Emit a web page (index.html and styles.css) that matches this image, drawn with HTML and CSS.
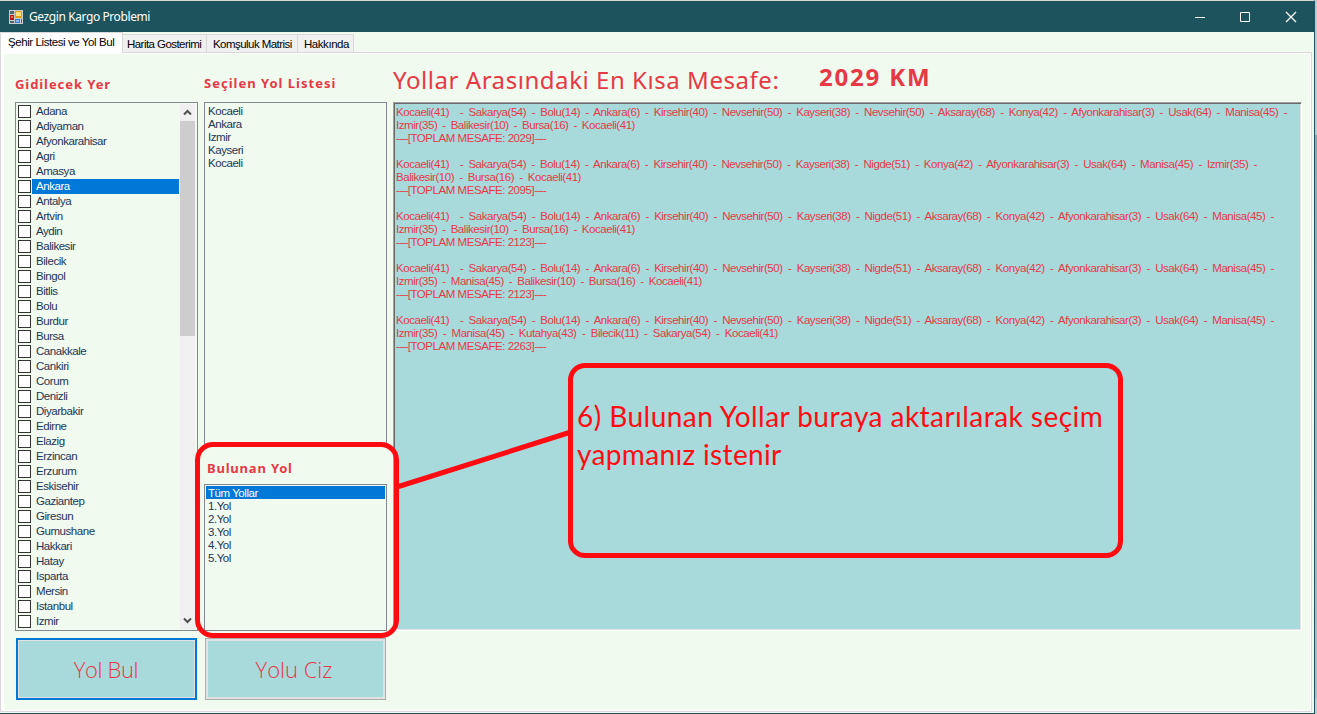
FILE: index.html
```html
<!DOCTYPE html>
<html lang="tr">
<head>
<meta charset="utf-8">
<title>Gezgin Kargo Problemi</title>
<link rel="stylesheet" href="styles.css">
</head>
<body>
<div class="window">
  <header class="titlebar">
    <svg class="app-icon" width="14" height="14" viewBox="0 0 14 14">
      <rect width="14" height="14" fill="#c9cdd0"/>
      <rect x="1" y="1" width="4" height="3" fill="#54666c"/>
      <rect x="1" y="5" width="4" height="5" fill="#b3160f"/><rect x="2" y="6" width="2" height="2" fill="#f0705c"/>
      <rect x="1" y="11" width="4" height="2" fill="#54666c"/>
      <rect x="6" y="1" width="7" height="7" fill="#e0a010"/><rect x="7" y="2" width="5" height="4" fill="#ffe27a"/>
      <rect x="6" y="9" width="5" height="4" fill="#3a78d8"/><rect x="7" y="10" width="3" height="2" fill="#86b8ff"/>
      <rect x="12" y="9" width="1" height="4" fill="#54666c"/>
    </svg>
    <span class="title">Gezgin Kargo Problemi</span>
    <svg class="controls" width="110" height="12" viewBox="0 0 110 12" fill="none" stroke="#fff">
      <path d="M1 6.500h10"/><path d="M46.500 1.500h9v9h-9z"/><path d="M92 1l10 10M102 1l-10 10" stroke-width="1.300"/>
    </svg>
  </header>
  <nav class="tabs">
    <span class="tab active">Şehir Listesi ve Yol Bul</span>
    <span class="tab t2">Harita Gosterimi</span>
    <span class="tab t3">Komşuluk Matrisi</span>
    <span class="tab t4">Hakkında</span>
  </nav>
  <main class="page">
    <section class="col">
      <h2 class="h-cities">Gidilecek Yer</h2>
      <div class="box cities">
        <ul>
          <li><i></i><b>Adana</b></li><li><i></i><b>Adiyaman</b></li><li><i></i><b>Afyonkarahisar</b></li><li><i></i><b>Agri</b></li><li><i></i><b>Amasya</b></li><li class="sel"><i></i><b>Ankara</b></li><li><i></i><b>Antalya</b></li><li><i></i><b>Artvin</b></li><li><i></i><b>Aydin</b></li><li><i></i><b>Balikesir</b></li><li><i></i><b>Bilecik</b></li><li><i></i><b>Bingol</b></li><li><i></i><b>Bitlis</b></li><li><i></i><b>Bolu</b></li><li><i></i><b>Burdur</b></li><li><i></i><b>Bursa</b></li><li><i></i><b>Canakkale</b></li><li><i></i><b>Cankiri</b></li><li><i></i><b>Corum</b></li><li><i></i><b>Denizli</b></li><li><i></i><b>Diyarbakir</b></li><li><i></i><b>Edirne</b></li><li><i></i><b>Elazig</b></li><li><i></i><b>Erzincan</b></li><li><i></i><b>Erzurum</b></li><li><i></i><b>Eskisehir</b></li><li><i></i><b>Gaziantep</b></li><li><i></i><b>Giresun</b></li><li><i></i><b>Gumushane</b></li><li><i></i><b>Hakkari</b></li><li><i></i><b>Hatay</b></li><li><i></i><b>Isparta</b></li><li><i></i><b>Mersin</b></li><li><i></i><b>Istanbul</b></li><li><i></i><b>Izmir</b></li>
        </ul>
        <div class="scroll">
          <svg width="15" height="17" viewBox="0 0 15 17"><path d="M4 10.500l3.500-3.500 3.500 3.500" fill="none" stroke="#505050" stroke-width="2"/></svg>
          <div class="thumb"></div>
          <svg width="15" height="17" viewBox="0 0 15 17"><path d="M4 6.500l3.500 3.500 3.500-3.500" fill="none" stroke="#505050" stroke-width="2"/></svg>
        </div>
      </div>
      <button class="btn focus">Yol Bul</button>
    </section>
    <section class="col">
      <h2 class="h-sel">Seçilen Yol Listesi</h2>
      <div class="box chosen"><p>Kocaeli</p><p>Ankara</p><p>Izmir</p><p>Kayseri</p><p>Kocaeli</p></div>
      <h2 class="h-found">Bulunan Yol</h2>
      <div class="box found"><p class="sel">Tüm Yollar</p><p>1.Yol</p><p>2.Yol</p><p>3.Yol</p><p>4.Yol</p><p>5.Yol</p></div>
      <button class="btn draw">Yolu Ciz</button>
    </section>
    <section class="result">
      <div class="summary"><span class="label">Yollar Arasındaki En Kısa Mesafe:</span><span class="km">2029 KM</span></div>
      <div class="log">
        <p class="w891">Kocaeli(41)&nbsp; - Sakarya(54) - Bolu(14) - Ankara(6) - Kirsehir(40) - Nevsehir(50) - Kayseri(38) - Nevsehir(50) - Aksaray(68) - Konya(42) - Afyonkarahisar(3) - Usak(64) - Manisa(45) -</p>
        <p class="w239">Izmir(35) - Balikesir(10) - Bursa(16) - Kocaeli(41)</p>
        <p class="total"><s>----</s>[TOPLAM MESAFE: 2029]<s>----</s></p>
        <p class="w861">Kocaeli(41)&nbsp; - Sakarya(54) - Bolu(14) - Ankara(6) - Kirsehir(40) - Nevsehir(50) - Kayseri(38) - Nigde(51) - Konya(42) - Afyonkarahisar(3) - Usak(64) - Manisa(45) - Izmir(35) -</p>
        <p class="w185">Balikesir(10) - Bursa(16) - Kocaeli(41)</p>
        <p class="total"><s>----</s>[TOPLAM MESAFE: 2095]<s>----</s></p>
        <p class="w878">Kocaeli(41)&nbsp; - Sakarya(54) - Bolu(14) - Ankara(6) - Kirsehir(40) - Nevsehir(50) - Kayseri(38) - Nigde(51) - Aksaray(68) - Konya(42) - Afyonkarahisar(3) - Usak(64) - Manisa(45) -</p>
        <p class="w239">Izmir(35) - Balikesir(10) - Bursa(16) - Kocaeli(41)</p>
        <p class="total"><s>----</s>[TOPLAM MESAFE: 2123]<s>----</s></p>
        <p class="w878">Kocaeli(41)&nbsp; - Sakarya(54) - Bolu(14) - Ankara(6) - Kirsehir(40) - Nevsehir(50) - Kayseri(38) - Nigde(51) - Aksaray(68) - Konya(42) - Afyonkarahisar(3) - Usak(64) - Manisa(45) -</p>
        <p class="w306">Izmir(35) - Manisa(45) - Balikesir(10) - Bursa(16) - Kocaeli(41)</p>
        <p class="total"><s>----</s>[TOPLAM MESAFE: 2123]<s>----</s></p>
        <p class="w878">Kocaeli(41)&nbsp; - Sakarya(54) - Bolu(14) - Ankara(6) - Kirsehir(40) - Nevsehir(50) - Kayseri(38) - Nigde(51) - Aksaray(68) - Konya(42) - Afyonkarahisar(3) - Usak(64) - Manisa(45) -</p>
        <p class="w382">Izmir(35) - Manisa(45) - Kutahya(43) - Bilecik(11) - Sakarya(54) - Kocaeli(41)</p>
        <p class="total"><s>----</s>[TOPLAM MESAFE: 2263]<s>----</s></p>
      </div>
    </section>
  </main>
</div>
<svg class="connector" width="176" height="66" viewBox="0 0 176 66"><path d="M1 60L175 5" stroke="#ff0c12" stroke-width="5"/></svg>
<div class="mark mark-found"></div>
<div class="mark mark-note"><span class="n1">6) Bulunan Yollar buraya aktarılarak seçim</span><br><span class="n2">yapmanız istenir</span></div>
</body>
</html>
```
FILE: styles.css
```css
* { box-sizing: border-box; }
body { margin: 0; width: 1317px; height: 714px; overflow: hidden; position: relative; background: linear-gradient(#c3c8c9 0 80px, #c3c8c9 135px, #96a3ae 135px, #b4bac1 698px, #c8c8c8 699px); font-family: "Liberation Sans", Arial, sans-serif; font-size: 11.5px; letter-spacing: -0.45px; color: #1d3557; }
p, ul, h2 { margin: 0; padding: 0; }

/* window frame */
.window { width: 1315px; height: 714px; background: #f1faee; border: solid #1c535c; border-width: 0 1px 1px 0; border-top: 1px solid #d5dad8; display: flex; flex-direction: column; }
.titlebar { height: 31px; flex: none; background: #1c535c; display: flex; align-items: center; padding: 0 10px 0 9px; }
.title { margin-left: 6px; color: #fff; font: 12px/16px "Noto Sans", sans-serif; letter-spacing: -0.41px; }
.controls { margin-left: auto; }

/* tabs */
.tabs { height: 20px; flex: none; display: flex; align-items: flex-end; color: #000; }
.tab { height: 18px; line-height: 18px; background: #f0f0f0; border: solid #d9d9d9; border-width: 1px 1px 0 0; padding-left: 4px; white-space: nowrap; }
.tab.active { height: 21px; width: 123px; margin-bottom: -1px; position: relative; background: #fff; padding-left: 7px; border-width: 1px 1px 0 1px; line-height: 19px; letter-spacing: -0.42px; }
.t2 { width: 84px; letter-spacing: -0.55px; }
.t3 { width: 91px; padding-left: 6px; letter-spacing: -0.55px; }
.t4 { width: 56px; padding-left: 6px; letter-spacing: -0.45px; }

.page { flex: none; width: 1312px; height: 660px; border: 1px solid #d9d9d9; box-shadow: inset 0 0 0 1px #fff, inset 2px 0 0 1px #fff; padding-left: 14px; display: flex; }
.col { width: 183px; margin-right: 6px; height: 658px; display: flex; flex-direction: column; }
h2 { height: 49px; flex: none; padding-top: 21px; font: bold 13px/18px "Noto Sans", sans-serif; letter-spacing: 1px; color: #e63946; white-space: nowrap; }
h2.h-cities { padding-top: 22px; letter-spacing: 0.93px; }
h2.h-found { height: 38px; padding: 13px 0 0 3px; letter-spacing: 0.8px; }

/* list boxes */
.box { border: 1px solid #828790; padding: 1px; flex: none; }
.cities { height: 529px; display: flex; justify-content: space-between; padding-right: 2px; }
ul { list-style: none; width: 162px; }
li { height: 15px; display: flex; align-items: center; padding-left: 1px; }
li i { width: 13px; height: 13px; background: #fff; border: 1px solid #333; margin-right: 1px; }
li b { font-weight: normal; flex: 1; height: 15px; line-height: 14px; padding-left: 4px; }
.sel b, p.sel { background: #0078d7; color: #fff; }
.scroll { width: 15px; background: #f0f0f0; display: flex; flex-direction: column; }
.scroll svg { flex: none; }
.thumb { height: 215px; background: #cdcdcd; margin-bottom: auto; }
.chosen { height: 344px; }
.found { height: 147px; }
.box p { height: 13px; line-height: 15px; padding-left: 2px; }

.btn { width: 181px; height: 62px; margin: 7px 0 0 1px; padding: 0 1px 1px 0; border: 1px solid #adadad; box-shadow: inset 0 0 0 2px #e1e1e1; background: #a8dadc; color: #e63946; font: 300 22px/30px "Open Sans", sans-serif; letter-spacing: -0.35px; }
.btn.focus { border: 2px solid #0078d7; box-shadow: inset 0 0 0 1px #e1e1e1; }
.btn.draw { letter-spacing: 0; padding-right: 3px; }

/* result panel */
.result { width: 909px; }
.summary { height: 49px; display: flex; color: #e63946; font: 24px/30px "Noto Sans", sans-serif; letter-spacing: 0.55px; white-space: nowrap; padding-top: 12px; }
.label { width: 426px; }
.km { font-weight: bold; letter-spacing: 1.8px; margin-top: -3px; }
.log { width: 909px; height: 529px; background: #a8dadc; border: 1px solid #a0a0a0; border-right-color: #fff; border-bottom-color: #fff; box-shadow: inset 1px 1px #696969, inset -1px -1px #e3e3e3; color: #e63946; padding: 3px 0 0 2px; }
.log p { height: 13px; line-height: 13px; white-space: nowrap; text-align: justify; text-align-last: justify; }
.log .total { margin-bottom: 13px; text-align-last: left; }
.total s { text-decoration: none; letter-spacing: -0.9px; }
.w891 { width: 891px; }
.w861 { width: 861px; }
.w878 { width: 878px; }
.w239 { width: 239px; }
.w185 { width: 185px; }
.w306 { width: 306px; }
.w382 { width: 382px; }

/* annotations */
.mark { position: absolute; border: 5px solid #ff0c12; }
.mark-found { left: 195px; top: 442px; width: 204px; height: 196px; border-radius: 18px; }
.mark-note { left: 568px; top: 363px; width: 555px; height: 195px; border-radius: 17px; color: #ff0c12; font: 28px/38px Lato, sans-serif; letter-spacing: 0.46px; padding: 29px 0 0 4px; white-space: nowrap; }
.n2 { letter-spacing: 0.35px; }
.connector { position: absolute; left: 396px; top: 427px; }
```
